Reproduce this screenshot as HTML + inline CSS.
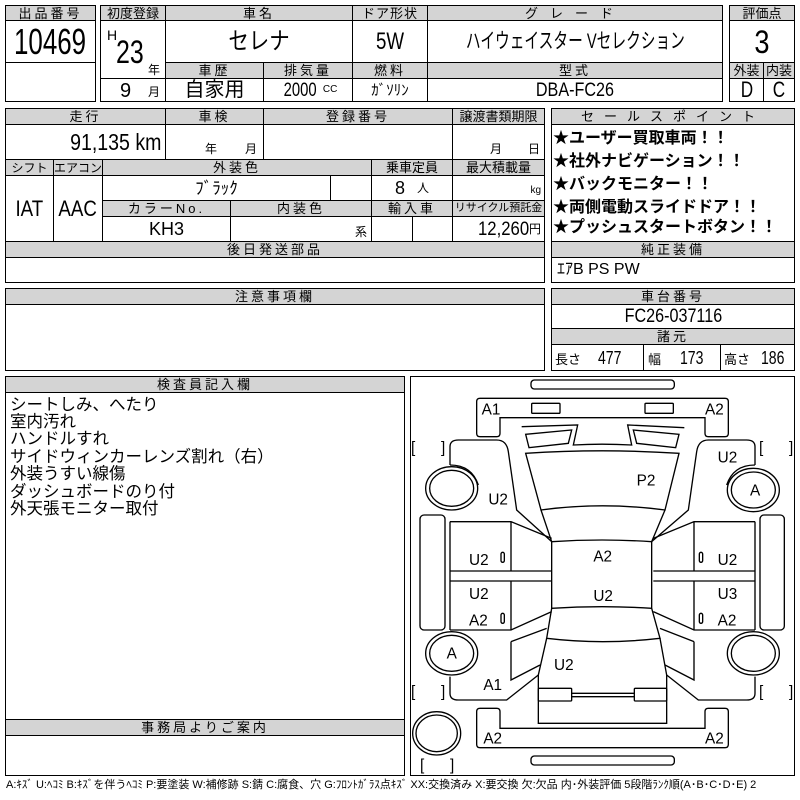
<!DOCTYPE html>
<html><head><meta charset="utf-8"><style>
body{margin:0;width:800px;height:800px;background:#fff;position:relative;overflow:hidden;font-family:"Liberation Sans","Noto Sans CJK JP",sans-serif;color:#000}
.c{position:absolute;border:1px solid #000;box-sizing:border-box;display:flex;align-items:center;justify-content:center;white-space:nowrap;line-height:1}
.h{background:#d4d4d4;font-size:13px;letter-spacing:3px}
.t{position:absolute;white-space:nowrap;line-height:1}
.n{display:inline-block;transform:scaleX(0.78)}
.sp{font-weight:bold;font-size:16px;position:absolute;left:553px;white-space:nowrap;line-height:1}
.ins{position:absolute;left:10px;font-size:16.5px;white-space:nowrap;line-height:1}
</style></head><body>
<div class="c h" style="left:5px;top:5px;width:91px;height:16px">出品番号</div>
<div class="c" style="left:5px;top:20px;width:91px;height:43px;font-size:36px"><span class="n" style="transform:scaleX(0.72)">10469</span></div>
<div class="c" style="left:5px;top:62px;width:91px;height:40px"></div>
<div class="c h" style="left:100px;top:5px;width:66px;height:16px;letter-spacing:0">初度登録</div>
<div class="c h" style="left:165px;top:5px;width:188px;height:16px">車名</div>
<div class="c h" style="left:352px;top:5px;width:76px;height:16px;letter-spacing:1px">ドア形状</div>
<div class="c h" style="left:427px;top:5px;width:296px;height:16px;letter-spacing:12px">グレード</div>
<div class="c" style="left:100px;top:20px;width:66px;height:59px"></div>
<div class="t" style="left:107px;top:28px;font-size:14px">H</div>
<div class="t" style="left:116px;top:36px;font-size:32px"><span class="n" style="transform-origin:0 0">23</span></div>
<div class="t" style="left:148px;top:64px;font-size:12px">年</div>
<div class="c" style="left:165px;top:20px;width:188px;height:43px;font-size:24px"><span class="n" style="transform:scaleX(0.85)">セレナ</span></div>
<div class="c" style="left:352px;top:20px;width:76px;height:43px;font-size:24px"><span class="n">5W</span></div>
<div class="c" style="left:427px;top:20px;width:296px;height:43px;font-size:21px"><span class="n" style="transform:scaleX(0.7)">ハイウェイスター Vセレクション</span></div>
<div class="c h" style="left:165px;top:62px;width:99px;height:17px">車歴</div>
<div class="c h" style="left:263px;top:62px;width:90px;height:17px">排気量</div>
<div class="c h" style="left:352px;top:62px;width:76px;height:17px">燃料</div>
<div class="c h" style="left:427px;top:62px;width:296px;height:17px">型式</div>
<div class="c" style="left:100px;top:78px;width:66px;height:24px"></div>
<div class="t" style="left:120px;top:81px;font-size:20px">9</div>
<div class="t" style="left:148px;top:86px;font-size:12px">月</div>
<div class="c" style="left:165px;top:78px;width:99px;height:24px;font-size:20px">自家用</div>
<div class="c" style="left:263px;top:78px;width:90px;height:24px;font-size:19px"><span class="n">2000</span><span style="font-size:10px;margin-left:2px">CC</span></div>
<div class="c" style="left:352px;top:78px;width:76px;height:24px;font-size:15px">ｶﾞｿﾘﾝ</div>
<div class="c" style="left:427px;top:78px;width:296px;height:24px;font-size:19px"><span class="n" style="transform:scaleX(0.85)">DBA-FC26</span></div>
<div class="c h" style="left:729px;top:5px;width:66px;height:16px;letter-spacing:0">評価点</div>
<div class="c" style="left:729px;top:20px;width:66px;height:43px;font-size:32px"><span class="n" style="transform:scaleX(0.85)">3</span></div>
<div class="c h" style="left:729px;top:62px;width:35px;height:17px;letter-spacing:0">外装</div>
<div class="c h" style="left:763px;top:62px;width:32px;height:17px;letter-spacing:0">内装</div>
<div class="c" style="left:729px;top:78px;width:35px;height:24px;font-size:22px"><span class="n">D</span></div>
<div class="c" style="left:763px;top:78px;width:32px;height:24px;font-size:22px"><span class="n">C</span></div>
<div class="c h" style="left:5px;top:108px;width:161px;height:17px">走行</div>
<div class="c h" style="left:165px;top:108px;width:99px;height:17px">車検</div>
<div class="c h" style="left:263px;top:108px;width:190px;height:17px">登録番号</div>
<div class="c h" style="left:452px;top:108px;width:93px;height:17px;letter-spacing:0">譲渡書類期限</div>
<div class="c" style="left:5px;top:124px;width:161px;height:36px;font-size:23px;justify-content:flex-end;padding-right:4px"><span class="n" style="transform:scaleX(0.85);transform-origin:100% 50%">91,135 km</span></div>
<div class="c" style="left:165px;top:124px;width:99px;height:36px"></div>
<div class="t" style="left:205px;top:143px;font-size:12px">年</div><div class="t" style="left:245px;top:143px;font-size:12px">月</div>
<div class="c" style="left:263px;top:124px;width:190px;height:36px"></div>
<div class="c" style="left:452px;top:124px;width:93px;height:36px"></div>
<div class="t" style="left:490px;top:143px;font-size:12px">月</div><div class="t" style="left:528px;top:143px;font-size:12px">日</div>
<div class="c h" style="left:5px;top:159px;width:49px;height:17px;letter-spacing:0;font-size:12px">シフト</div>
<div class="c h" style="left:53px;top:159px;width:50px;height:17px;letter-spacing:0;font-size:12px">エアコン</div>
<div class="c h" style="left:102px;top:159px;width:270px;height:17px">外装色</div>
<div class="c h" style="left:371px;top:159px;width:82px;height:17px;letter-spacing:0">乗車定員</div>
<div class="c h" style="left:452px;top:159px;width:93px;height:17px;letter-spacing:0">最大積載量</div>
<div class="c" style="left:5px;top:175px;width:49px;height:67px;font-size:22px"><span class="n" style="transform:scaleX(0.85)">IAT</span></div>
<div class="c" style="left:53px;top:175px;width:50px;height:67px;font-size:22px"><span class="n" style="transform:scaleX(0.85)">AAC</span></div>
<div class="c" style="left:102px;top:175px;width:229px;height:26px;font-size:17px">ﾌﾞﾗｯｸ</div>
<div class="c" style="left:330px;top:175px;width:42px;height:26px"></div>
<div class="c" style="left:371px;top:175px;width:82px;height:26px;font-size:18px">8 <span style="font-size:12px;margin-left:12px">人</span></div>
<div class="c" style="left:452px;top:175px;width:93px;height:26px;justify-content:flex-end;align-items:flex-end;font-size:10px;padding:0 3px 4px 0">kg</div>
<div class="c h" style="left:102px;top:200px;width:129px;height:17px">カラーNo.</div>
<div class="c h" style="left:230px;top:200px;width:142px;height:17px">内装色</div>
<div class="c h" style="left:371px;top:200px;width:82px;height:17px">輸入車</div>
<div class="c h" style="left:452px;top:200px;width:93px;height:17px;letter-spacing:0;font-size:11px">リサイクル預託金</div>
<div class="c" style="left:102px;top:216px;width:129px;height:26px;font-size:18px">KH3</div>
<div class="c" style="left:230px;top:216px;width:142px;height:26px;justify-content:flex-end;align-items:flex-end;font-size:12px;padding:0 4px 3px 0">系</div>
<div class="c" style="left:371px;top:216px;width:42px;height:26px"></div>
<div class="c" style="left:412px;top:216px;width:41px;height:26px"></div>
<div class="c" style="left:452px;top:216px;width:93px;height:26px;font-size:19px;justify-content:flex-end;padding-right:3px"><span class="n" style="transform:scaleX(0.88);transform-origin:100% 50%">12,260</span><span style="font-size:12px">円</span></div>
<div class="c h" style="left:5px;top:241px;width:540px;height:17px">後日発送部品</div>
<div class="c" style="left:5px;top:257px;width:540px;height:26px"></div>
<div class="c h" style="left:551px;top:108px;width:244px;height:17px;letter-spacing:10px">セールスポイント</div>
<div class="c" style="left:551px;top:124px;width:244px;height:118px"></div>
<div class="sp" style="top:131px">★ユーザー買取車両！！</div>
<div class="sp" style="top:154px">★社外ナビゲーション！！</div>
<div class="sp" style="top:177px">★バックモニター！！</div>
<div class="sp" style="top:200px">★両側電動スライドドア！！</div>
<div class="sp" style="top:220px">★プッシュスタートボタン！！</div>
<div class="c h" style="left:551px;top:241px;width:244px;height:17px">純正装備</div>
<div class="c" style="left:551px;top:257px;width:244px;height:26px;justify-content:flex-start;padding-left:5px;font-size:16px">ｴｱB PS PW</div>
<div class="c h" style="left:5px;top:288px;width:540px;height:17px">注意事項欄</div>
<div class="c" style="left:5px;top:304px;width:540px;height:67px"></div>
<div class="c h" style="left:551px;top:288px;width:244px;height:17px">車台番号</div>
<div class="c" style="left:551px;top:304px;width:244px;height:25px;font-size:19px"><span class="n" style="transform:scaleX(0.85)">FC26-037116</span></div>
<div class="c h" style="left:551px;top:328px;width:244px;height:17px">諸元</div>
<div class="c" style="left:551px;top:344px;width:93px;height:27px"></div>
<div class="c" style="left:643px;top:344px;width:78px;height:27px"></div>
<div class="c" style="left:720px;top:344px;width:75px;height:27px"></div>
<div class="t" style="left:555px;top:353px;font-size:13px">長さ</div><div class="t" style="left:598px;top:349px;font-size:18px"><span class="n" style="transform-origin:0 0">477</span></div>
<div class="t" style="left:648px;top:353px;font-size:13px">幅</div><div class="t" style="left:680px;top:349px;font-size:18px"><span class="n" style="transform-origin:0 0">173</span></div>
<div class="t" style="left:724px;top:353px;font-size:13px">高さ</div><div class="t" style="left:761px;top:349px;font-size:18px"><span class="n" style="transform-origin:0 0">186</span></div>
<div class="c h" style="left:5px;top:376px;width:400px;height:17px">検査員記入欄</div>
<div class="c" style="left:5px;top:392px;width:400px;height:384px"></div>
<div class="ins" style="top:397px">シートしみ、へたり</div>
<div class="ins" style="top:414px">室内汚れ</div>
<div class="ins" style="top:431px">ハンドルすれ</div>
<div class="ins" style="top:449px">サイドウィンカーレンズ割れ（右）</div>
<div class="ins" style="top:466px">外装うすい線傷</div>
<div class="ins" style="top:484px">ダッシュボードのり付</div>
<div class="ins" style="top:501px">外天張モニター取付</div>
<div class="c h" style="left:5px;top:719px;width:400px;height:17px">事務局よりご案内</div>
<div class="c" style="left:410px;top:376px;width:385px;height:400px"></div>
<svg style="position:absolute;left:405px;top:375px" width="395" height="400" viewBox="0 0 1185 1200">
<g fill="none" stroke="#000" stroke-width="4">
<rect x="378" y="15" width="430" height="27" rx="10"/>
<rect x="378" y="1143" width="430" height="27" rx="10"/>
<path d="M225,70 L960,70 Q970,70 970,80 L970,175 Q970,185 960,185 L910,185 Q900,185 900,175 L900,128 L285,128 L285,175 Q285,185 275,185 L225,185 Q215,185 215,175 L215,80 Q215,70 225,70 Z"/>
<rect x="380" y="85" width="85" height="30" rx="3"/>
<rect x="720" y="85" width="85" height="30" rx="3"/>
<path d="M225,1000 L275,1000 Q285,1000 285,1010 L285,1060 L900,1060 L900,1010 Q900,1000 910,1000 L960,1000 Q970,1000 970,1010 L970,1108 Q970,1118 960,1118 L225,1118 Q215,1118 215,1108 L215,1010 Q215,1000 225,1000 Z"/>
<path d="M350,155 L518,150 L505,210 Q590,205 680,210 L668,150 L838,158"/>
<path d="M362,178 L500,165 L490,205 L372,218 Z"/>
<path d="M685,165 L822,178 L812,218 L695,205 Z"/>
<path d="M362,235 Q592,220 822,235 L780,405 Q592,380 408,405 Z"/>
<path d="M408,405 L440,500 Q592,490 740,500 L780,405"/>
<path d="M440,500 L440,700 Q592,690 740,700 L740,500"/>
<path d="M440,700 L425,790 Q592,810 765,790 L740,700"/>
<path d="M425,790 L400,900 L400,1045 L785,1045 L785,900 L765,790"/>
<rect x="400" y="940" width="100" height="38" rx="3"/>
<rect x="688" y="940" width="97" height="38" rx="3"/>
<path d="M500,955 L688,955 M500,965 L688,965"/>
<path d="M135,270 L135,215 Q135,195 160,195 L275,195 Q305,195 310,230 L335,405 L440,500"/>
<path d="M1050,270 L1050,215 Q1050,195 1025,195 L910,195 Q880,195 875,230 L850,405 L740,500"/>
<path d="M135,270 Q200,270 220,330"/><path d="M1050,270 Q985,270 965,330"/>
<path d="M135,905 L135,955 Q135,975 160,975 L305,975 L400,900"/>
<path d="M1050,905 L1050,955 Q1050,975 1025,975 L880,975 L785,900"/>
<path d="M135,440 L318,440 L440,490 M135,588 L440,588 M135,618 L440,618 M135,765 L318,765 L440,710 M318,440 L318,588 M318,618 L318,765 M135,440 L135,765"/>
<path d="M1050,440 L867,440 L745,490 M1050,588 L745,588 M1050,618 L745,618 M1050,765 L867,765 L745,710 M867,440 L867,588 M867,618 L867,765 M1050,440 L1050,765"/>
<path d="M318,800 L425,760 M318,800 L318,915 L405,870"/>
<path d="M867,800 L765,760 M867,800 L867,915 L780,870"/>
<rect x="45" y="420" width="75" height="345" rx="12"/>
<rect x="1065" y="420" width="73" height="345" rx="12"/>
<rect x="288" y="532" width="10" height="30" rx="5"/><rect x="288" y="715" width="10" height="30" rx="5"/>
<rect x="883" y="532" width="10" height="30" rx="5"/><rect x="883" y="715" width="10" height="30" rx="5"/>
<ellipse cx="140" cy="340" rx="78" ry="65"/><ellipse cx="140" cy="340" rx="66" ry="54"/>
<ellipse cx="140" cy="835" rx="78" ry="65"/><ellipse cx="140" cy="835" rx="66" ry="54"/>
<ellipse cx="1045" cy="345" rx="78" ry="65"/><ellipse cx="1045" cy="345" rx="66" ry="54"/>
<ellipse cx="1045" cy="835" rx="78" ry="65"/><ellipse cx="1045" cy="835" rx="66" ry="54"/>
<ellipse cx="95" cy="1075" rx="72" ry="65"/><ellipse cx="95" cy="1075" rx="62" ry="55"/>
</g>
<g font-family="Liberation Sans, sans-serif" font-size="46" fill="#000">
<text x="230" y="118">A1</text><text x="900" y="118">A2</text>
<text x="938" y="262">U2</text><text x="695" y="332">P2</text>
<text x="250" y="388">U2</text><text x="1035" y="362">A</text>
<text x="192" y="570">U2</text><text x="565" y="560">A2</text><text x="938" y="570">U2</text>
<text x="192" y="672">U2</text><text x="565" y="678">U2</text><text x="938" y="672">U3</text>
<text x="192" y="752">A2</text><text x="938" y="752">A2</text>
<text x="125" y="850">A</text><text x="447" y="885">U2</text><text x="235" y="945">A1</text>
<text x="235" y="1105">A2</text><text x="900" y="1105">A2</text>
<text x="18" y="232">[</text><text x="108" y="232">]</text>
<text x="1062" y="232">[</text><text x="1152" y="232">]</text>
<text x="18" y="965">[</text><text x="108" y="965">]</text>
<text x="1062" y="965">[</text><text x="1152" y="965">]</text>
<text x="45" y="1185">[</text><text x="135" y="1185">]</text>
</g>
</svg>
<div class="t" style="left:6px;top:780px;font-size:11px">A:ｷｽﾞ U:ﾍｺﾐ B:ｷｽﾞを伴うﾍｺﾐ P:要塗装 W:補修跡 S:錆 C:腐食、穴 G:ﾌﾛﾝﾄｶﾞﾗｽ点ｷｽﾞ XX:交換済み X:要交換 欠:欠品 内･外装評価 5段階ﾗﾝｸ順(A･B･C･D･E) 2</div>
</body></html>
